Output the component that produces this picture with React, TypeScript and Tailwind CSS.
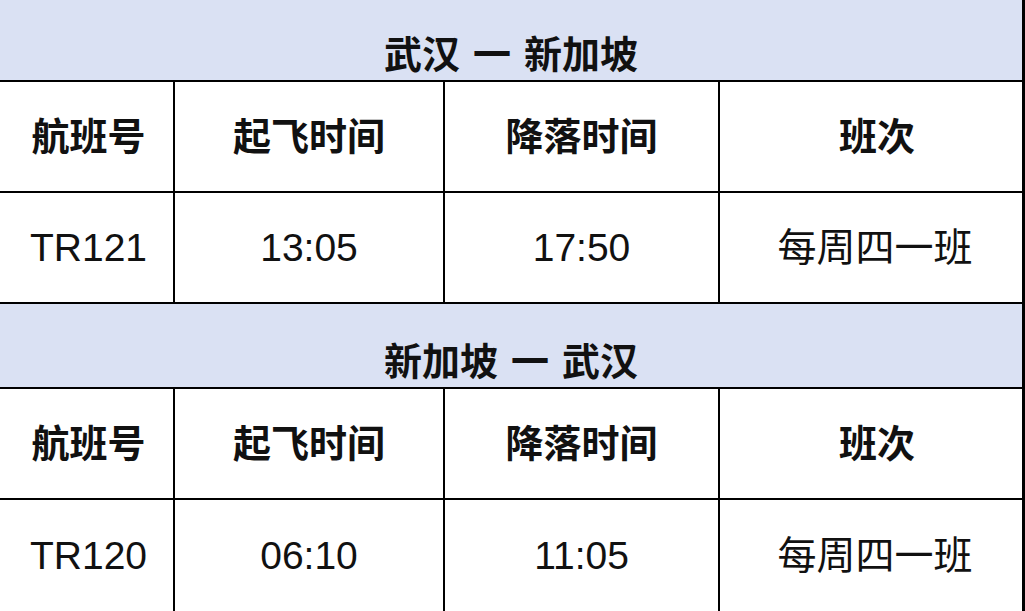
const font = "font-['Liberation_Sans','Noto_Sans_CJK_SC',sans-serif]";

const widths = ["w-[175px]", "w-[270px]", "w-[275px]", "flex-1"];

function Row({ cells, bold, last }: { cells: string[]; bold?: boolean; last?: boolean }) {
  return (
    <div className={`flex h-[111px] ${last ? "" : "border-b-2 border-black"}`}>
      {cells.map((c, i) => (
        <div
          key={i}
          className={`${widths[i]} shrink-0 flex items-center justify-center ${i < 3 ? "border-r-2 border-black" : ""}`}
        >
          <span
            className={`${bold ? "font-bold text-[38px]" : "text-[39px]"} leading-none text-[#111] ${i === 3 && !bold ? "text-[38px] pl-2" : ""} ${i === 0 ? "pl-1" : ""} ${i === 3 && bold ? "pl-3" : ""}`}
          >
            {c}
          </span>
        </div>
      ))}
    </div>
  );
}

function Title({ from, to, pt, h }: { from: string; to: string; pt: string; h: string }) {
  return (
    <div className={`${h} ${pt} bg-[#dae1f3] border-b-2 border-black flex justify-center`}>
      <span className="font-bold text-[38px] leading-none text-[#111] whitespace-pre">
        {from}
        <span className="px-[13px]">一</span>
        {to}
      </span>
    </div>
  );
}

const head = ["航班号", "起飞时间", "降落时间", "班次"];

export default function App() {
  return (
    <div className={`w-[1025px] h-[611px] overflow-hidden bg-white border-r-[3px] border-black ${font}`}>
      <Title from="武汉" to="新加坡" h="h-[82px]" pt="pt-[36px]" />
      <Row cells={head} bold />
      <Row cells={["TR121", "13:05", "17:50", "每周四一班"]} />
      <Title from="新加坡" to="武汉" h="h-[85px]" pt="pt-[39px]" />
      <Row cells={head} bold />
      <Row cells={["TR120", "06:10", "11:05", "每周四一班"]} last />
    </div>
  );
}
